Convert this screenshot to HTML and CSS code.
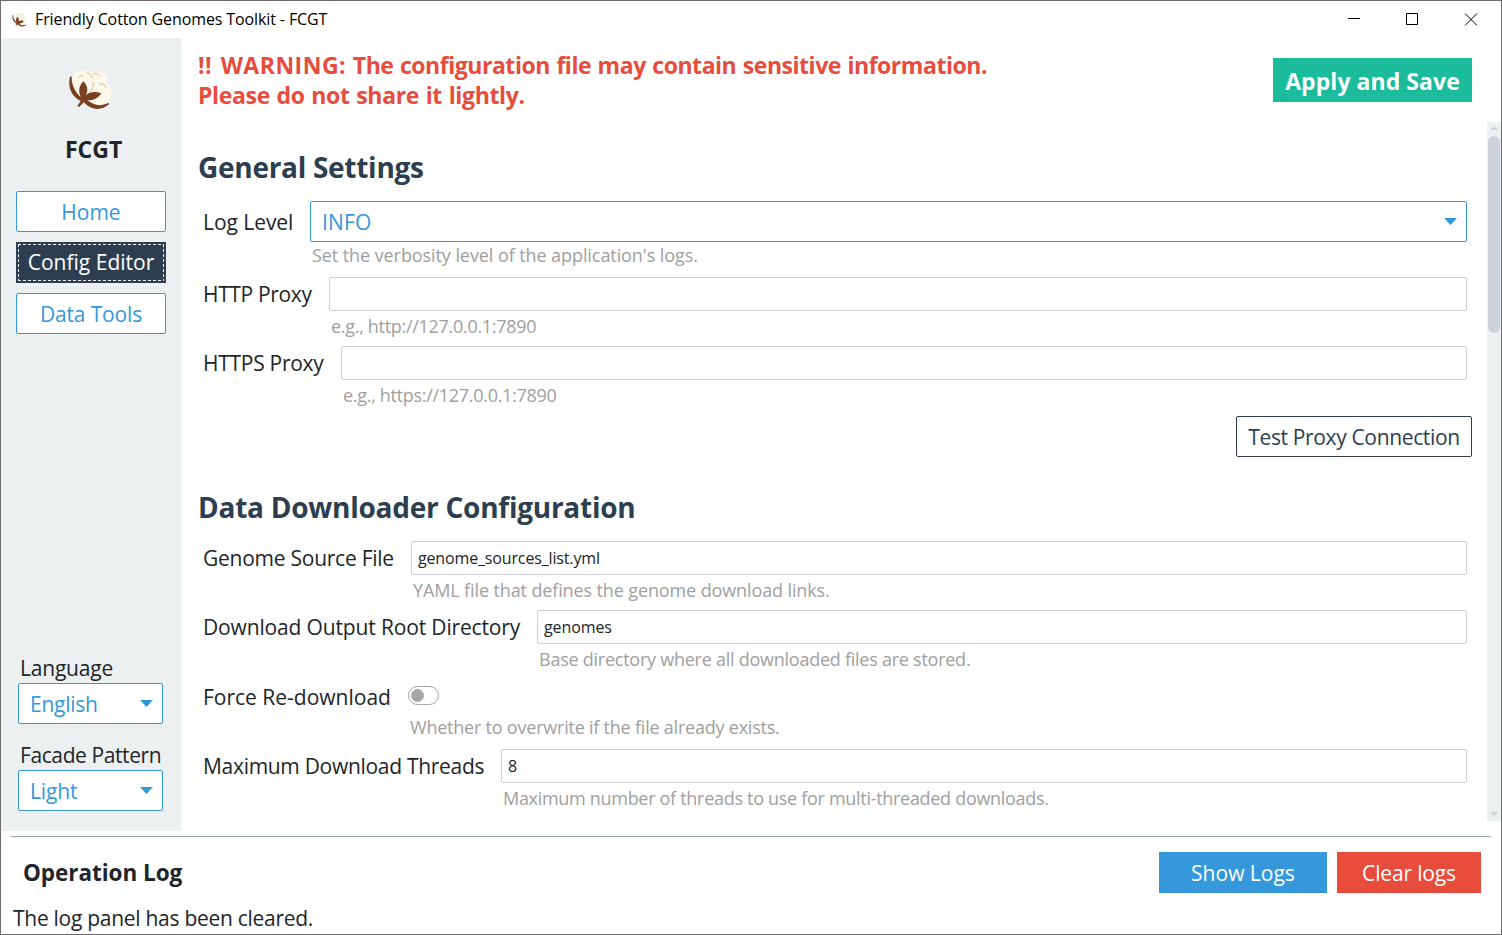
FILE: index.html
```html
<!DOCTYPE html>
<html lang="en">
<head>
<meta charset="utf-8">
<title>Friendly Cotton Genomes Toolkit - FCGT</title>
<link rel="stylesheet" href="styles.css">
</head>
<body>
<svg class="defs" width="0" height="0">
  <symbol id="cotton" viewBox="40 25 135 135">
    <g fill="#fdf8ea">
      <circle cx="83" cy="62" r="30"/>
      <circle cx="129" cy="61" r="28"/>
      <circle cx="132" cy="101" r="37"/>
      <circle cx="87" cy="88" r="27"/>
      <circle cx="105" cy="70" r="34"/>
    </g>
    <g fill="none" stroke="#d3c08c" stroke-width="3" stroke-linecap="round">
      <path d="M70 54q7-8 16-6"/>
      <path d="M97 38q11 3 18 18"/>
      <path d="M117 43q13-3 20 7"/>
      <path d="M135 72q14 0 22 11"/>
      <path d="M116 69q3 15-10 29"/>
    </g>
    <g fill="#7a3e20">
      <path d="M86 65c13 13 15 27 8 41 12-10 27-12 46-5-10 15-24 23-42 20 19 17 40 20 62 9l4 3c-23 20-52 21-77-5l-13 14-6-3 10-15C51 110 38 82 46 51l5-1c-1 24 8 45 27 62-8-18-5-34 8-47z"/>
    </g>
  </symbol>
</svg>
<div class="window">
  <header class="titlebar">
    <svg class="titlebar-icon"><use href="#cotton"/></svg>
    <span class="titlebar-text">Friendly Cotton Genomes Toolkit - FCGT</span>
    <div class="controls">
      <svg viewBox="0 0 58 37"><path d="M23 17.500h12"/></svg>
      <svg viewBox="0 0 58 37"><path d="M23.500 12.500h11v11h-11z"/></svg>
      <svg viewBox="0 0 58 37"><path d="M24 12.500l12 12M36 12.500l-12 12"/></svg>
    </div>
  </header>

  <div class="main">
    <aside class="sidebar">
      <svg class="logo"><use href="#cotton"/></svg>
      <div class="brand">FCGT</div>
      <nav class="nav">
        <button class="btn outline">Home</button>
        <button class="btn active">Config Editor</button>
        <button class="btn outline tr-15">Data Tools</button>
      </nav>
      <div class="prefs">
        <label class="pref-label tr-20">Language</label>
        <div class="select"><span class="tr-25">English</span><i class="caret"></i></div>
        <label class="pref-label pref-next tr-40">Facade Pattern</label>
        <div class="select"><span class="tr-15">Light</span><i class="caret"></i></div>
      </div>
    </aside>

    <main class="content">
      <div class="topline">
        <div class="warning"><span class="warning-lead">!! WARNING:</span> <span class="warning-rest">The configuration file may contain sensitive information.</span><br>Please do not share it lightly.</div>
        <button class="btn save">Apply and Save</button>
      </div>

      <div class="scroller">
        <div class="form">
          <h2 class="tr-28">General Settings</h2>
          <div class="field f-log">
            <label class="tr-5">Log Level</label>
            <div class="select wide"><span class="tr15">INFO</span><i class="caret"></i></div>
            <p class="hint tr-8">Set the verbosity level of the application's logs.</p>
          </div>
          <div class="field f-http">
            <label class="tr-35">HTTP Proxy</label>
            <div class="input"></div>
            <p class="hint tr-30">e.g., http://127.0.0.1:7890</p>
          </div>
          <div class="field f-https">
            <label class="tr-28">HTTPS Proxy</label>
            <div class="input"></div>
            <p class="hint tr-30">e.g., https://127.0.0.1:7890</p>
          </div>
          <div class="actions"><button class="btn dark tr-35">Test Proxy Connection</button></div>

          <h2 class="second tr-25">Data Downloader Configuration</h2>
          <div class="field f-source">
            <label class="tr-25">Genome Source File</label>
            <div class="input tr-15">genome_sources_list.yml</div>
            <p class="hint tr-12">YAML file that defines the genome download links.</p>
          </div>
          <div class="field f-root">
            <label class="tr-15">Download Output Root Directory</label>
            <div class="input tr-10">genomes</div>
            <p class="hint tr-25">Base directory where all downloaded files are stored.</p>
          </div>
          <div class="field f-force">
            <label>Force Re-download</label>
            <div class="toggle-cell"><div class="toggle"></div></div>
            <p class="hint tr-22">Whether to overwrite if the file already exists.</p>
          </div>
          <div class="field f-threads">
            <label class="tr-30">Maximum Download Threads</label>
            <div class="input">8</div>
            <p class="hint tr-30">Maximum number of threads to use for multi-threaded downloads.</p>
          </div>
        </div>
        <div class="scrollbar">
          <svg class="arrow" viewBox="0 0 14 14"><path d="M3 8l4-4 4 4z"/></svg>
          <div class="thumb"></div>
          <svg class="arrow" viewBox="0 0 14 14"><path d="M3 5l4 4 4-4z"/></svg>
        </div>
      </div>
    </main>
  </div>

  <footer class="log">
    <div class="log-head">
      <strong>Operation Log</strong>
      <button class="btn show">Show Logs</button>
      <button class="btn clear tr-15">Clear logs</button>
    </div>
    <div class="log-text tr-28">The log panel has been cleared.</div>
  </footer>
</div>
</body>
</html>
```
FILE: styles.css
```css
* { box-sizing: border-box; }

body {
  margin: 0;
  font-family: "Open Sans", "Noto Sans", sans-serif;
  font-size: 21px;
  color: #212529;
}

.defs { position: absolute; }

.window {
  width: 1502px;
  height: 935px;
  border: 1px solid #6f6c6e;
  background: #fff;
  display: flex;
  flex-direction: column;
  overflow: hidden;
  white-space: nowrap;
}

/* Title bar */
.titlebar {
  height: 37px;
  display: flex;
  align-items: center;
  padding-left: 11px;
  flex: none;
}
.titlebar-icon { width: 16px; height: 16px; margin: 1px 7px 0 0; }
.titlebar-text {
  font-size: 16px;
  line-height: 22px;
  padding-bottom: 1px;
  color: #000;
  letter-spacing: -0.11px;
}
.controls { display: flex; margin-left: auto; padding-right: 2px; }
.controls svg { width: 58px; height: 37px; fill: none; stroke: #000; stroke-width: 1; }

/* Sidebar */
.main { display: flex; height: 793px; flex: none; }
.sidebar {
  width: 180px;
  background: #ecf0f1;
  display: flex;
  flex-direction: column;
}
.logo { width: 45px; height: 45px; margin: 30px 0 0 67px; flex: none; }
.brand {
  margin: 21px 0 0 64px;
  font-size: 23px;
  line-height: 30px;
  font-weight: 700;
}
.nav {
  display: flex;
  flex-direction: column;
  gap: 10px;
  margin: 27px 15px 0;
}

.btn {
  height: 41px;
  padding: 2px 0 0;
  border: 0;
  font-family: inherit;
  font-size: 21px;
  line-height: 37px;
  color: #fff;
  text-align: center;
}
.btn.outline { background: #fff; border: 1px solid #3498db; border-radius: 2px; color: #3498db; }

/* Focus ring: 3px dashes, 2px gaps, inset by the border */
.btn.active {
  --across: repeating-linear-gradient(90deg, #fff 0 3px, transparent 3px 5px);
  --down: repeating-linear-gradient(180deg, #fff 0 3px, transparent 3px 5px);
  padding: 0;
  border: 2px solid #2c3e50;
  background-color: #2c3e50;
  background-image: var(--across), var(--across), var(--down), var(--down);
  background-size: 100% 1px, 100% 1px, 1px 100%, 1px 100%;
  background-position: top, bottom, left, right;
  background-repeat: no-repeat;
  background-origin: padding-box;
}

.prefs { margin: auto 0 20px 17px; width: 145px; }
.pref-label { display: block; height: 31px; line-height: 31px; padding: 1px 0 0 2px; }
.pref-next { margin-top: 15px; }

.select {
  height: 41px;
  padding: 0 9px 0 11px;
  border: 1px solid #3498db;
  border-radius: 2px;
  background: #fff;
  color: #3498db;
  display: flex;
  align-items: center;
  justify-content: space-between;
}
.caret {
  width: 13px;
  height: 7px;
  background: #3498db;
  clip-path: polygon(0 0, 100% 0, 50% 100%);
}

/* Content */
.content { flex: 1; display: flex; flex-direction: column; min-width: 0; }
.topline {
  height: 84px;
  padding: 12px 29px 0 17px;
  display: flex;
  justify-content: space-between;
}
.warning {
  font-size: 23px;
  line-height: 30px;
  font-weight: 700;
  color: #e74c3c;
  letter-spacing: -0.34px;
  word-spacing: 1px;
}
.warning-lead { letter-spacing: 0.50px; word-spacing: 2px; }
.warning-rest { letter-spacing: -0.46px; }
.save {
  width: 199px;
  height: 44px;
  margin-top: 8px;
  padding-top: 2px;
  background: #1abc9c;
  font-size: 23px;
  font-weight: 700;
  letter-spacing: 0.06px;
}

.scroller { display: flex; height: 699px; }
.form { flex: 1; padding: 27px 15px 0 17px; overflow: hidden; }

h2 {
  margin: 0 0 16px;
  font-size: 28px;
  line-height: 36px;
  font-weight: 700;
  color: #2c3e50;
}
h2.second { margin-top: 32px; }

.field {
  display: grid;
  grid-template-rows: 34px 35px;
  padding: 0 5px;
}
.field label { align-self: center; }
.field .hint {
  grid-column: 2;
  margin: 0 0 0 2px;
  font-size: 18px;
  line-height: 31px;
  color: #a0a0a0;
}
.f-log { grid-template-rows: 41px 35px; grid-template-columns: 107px 1fr; }
.f-log .hint { line-height: 27px; }
.f-http { grid-template-columns: 126px 1fr; }
.f-https { grid-template-columns: 138px 1fr; }
.f-source { grid-template-columns: 208px 1fr; }
.f-root { grid-template-columns: 334px 1fr; }
.f-force { grid-template-rows: 35px 35px; grid-template-columns: 205px 1fr; }
.f-force .hint { line-height: 27px; }
.f-threads { grid-template-columns: 298px 1fr; }

.select.wide { padding-right: 9px; }
.input {
  border: 1px solid #cdd0da;
  border-radius: 2px;
  padding-left: 6px;
  font-size: 16px;
  line-height: 33px;
}
.toggle-cell { display: flex; align-items: center; }
.toggle {
  width: 31px;
  height: 19px;
  border: 1px solid #a5a6a8;
  border-radius: 10px;
  padding: 2px;
  margin-bottom: 2px;
}
.toggle::before {
  content: "";
  display: block;
  width: 13px;
  height: 13px;
  border-radius: 50%;
  background: #a5a6a8;
}

.actions { display: flex; justify-content: flex-end; margin-top: 1px; }
.dark {
  width: 236px;
  background: #fff;
  border: 1px solid #2c3e50;
  border-radius: 2px;
  color: #2c3e50;
}

.scrollbar {
  width: 14px;
  background: #ecf0f1;
  display: flex;
  flex-direction: column;
  padding: 0 1px;
}
.arrow { width: 14px; height: 14px; margin-left: -1px; fill: #cdd1da; flex: none; }
.arrow:last-child { margin-top: auto; }
.thumb { height: 197px; border-radius: 6px; background: #cdd1da; flex: none; }

/* Log panel */
.log { margin: 5px 10px 0; border-top: 1px solid #95a5a6; }
.log-head {
  display: flex;
  gap: 10px;
  align-items: center;
  padding: 15px 10px 0 12px;
}
.log-head strong {
  font-size: 22.500px;
  line-height: 30px;
  letter-spacing: -0.04px;
  margin-right: auto;
}
.show { width: 168px; background: #3498db; }
.clear { width: 144px; background: #e74c3c; }
.log-text { margin: 11px 0 0 2px; line-height: 29px; }

/* Letter tracking, in hundredths of a pixel */
.tr-40 { letter-spacing: -0.40px; }
.tr-35 { letter-spacing: -0.35px; }
.tr-30 { letter-spacing: -0.30px; }
.tr-28 { letter-spacing: -0.28px; }
.tr-25 { letter-spacing: -0.25px; }
.tr-22 { letter-spacing: -0.22px; }
.tr-20 { letter-spacing: -0.20px; }
.tr-15 { letter-spacing: -0.15px; }
.tr-12 { letter-spacing: -0.12px; }
.tr-10 { letter-spacing: -0.10px; }
.tr-8 { letter-spacing: -0.08px; }
.tr-5 { letter-spacing: -0.05px; }
.tr15 { letter-spacing: 0.15px; }
```
